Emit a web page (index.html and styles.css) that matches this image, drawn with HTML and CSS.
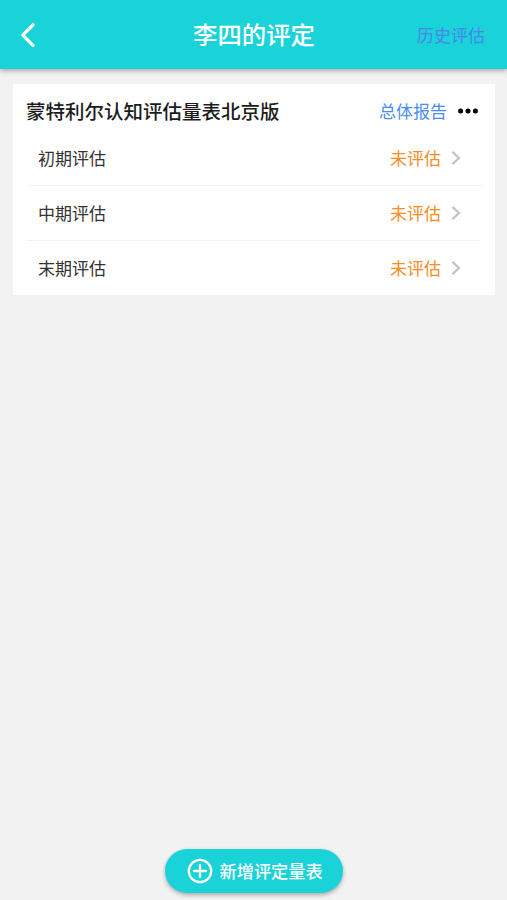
FILE: index.html
```html
<!DOCTYPE html>
<html lang="zh-CN">
<head>
    <meta charset="UTF-8">
    <meta name="viewport" content="width=device-width, initial-scale=1.0">
    <title>李四的评定</title>
    <link rel="stylesheet" href="styles.css">
</head>
<body>
    <header class="navbar">
        <a class="back" href="#" aria-label="返回">
            <svg width="16" height="26" viewBox="0 0 16 26"><path d="M13 2.8 2.8 13.2 13 23.4"/></svg>
        </a>
        <h1>李四的评定</h1>
        <a class="history" href="#">历史评估</a>
    </header>

    <main>
        <section class="card">
            <div class="card-header">
                <h2>蒙特利尔认知评估量表北京版</h2>
                <a class="report" href="#">总体报告</a>
                <svg class="more" width="20" height="6" viewBox="0 0 20 6"><circle cx="2.6" cy="3" r="2.5"/><circle cx="10" cy="3" r="2.5"/><circle cx="17.4" cy="3" r="2.5"/></svg>
            </div>
            <ul class="stages">
                <li>
                    <span class="name">初期评估</span>
                    <span class="status">未评估</span>
                    <svg class="arrow" width="10" height="16" viewBox="0 0 10 16"><path d="M1.4 1.8 8 8l-6.6 6.2"/></svg>
                </li>
                <li>
                    <span class="name">中期评估</span>
                    <span class="status">未评估</span>
                    <svg class="arrow" width="10" height="16" viewBox="0 0 10 16"><path d="M1.4 1.8 8 8l-6.6 6.2"/></svg>
                </li>
                <li>
                    <span class="name">末期评估</span>
                    <span class="status">未评估</span>
                    <svg class="arrow" width="10" height="16" viewBox="0 0 10 16"><path d="M1.4 1.8 8 8l-6.6 6.2"/></svg>
                </li>
            </ul>
        </section>
    </main>

    <footer>
        <button class="add-btn" type="button">
            <svg width="26" height="26" viewBox="0 0 26 26"><circle cx="13" cy="13" r="11.2"/><path d="M13 7v12M7 13h12"/></svg>
            <span>新增评定量表</span>
        </button>
    </footer>
</body>
</html>
```

FILE: styles.css
```css
* { box-sizing: border-box; }
body { display: flex; flex-direction: column; height: 100vh; margin: 0; background-color: #f2f2f2; color: #333; font-family: 'Noto Sans CJK SC', sans-serif; font-size: 17px; }
a { text-decoration: none; }
h1, h2, ul { margin: 0; padding: 0; }
svg { display: block; flex: none; }

.navbar { display: grid; grid-template-columns: 1fr auto 1fr; align-items: center; height: 69px; padding: 0 22px 0 20px; background-color: #1ad3d9; box-shadow: 0 2px 5px rgba(0,0,0,0.3); }
.navbar h1 { padding: 0 0 1px 3px; color: white; font-size: 24.4px; font-weight: 500; line-height: 36px; }
.back path { fill: none; stroke: white; stroke-width: 3.2; stroke-linecap: round; stroke-linejoin: round; }
.history { color: #4a84ee; text-align: right; line-height: 26px; }

main { flex: 1; padding: 15px 12px 0 13px; }
.card { height: 211px; padding: 7px 10px 0 13px; background-color: white; }
.card-header { display: flex; align-items: center; height: 40px; padding-right: 7px; }
.card-header h2 { flex: 1; padding-bottom: 2px; color: #1c1c1c; font-size: 19.5px; font-weight: 500; }
.report { margin-right: 11px; padding-bottom: 2px; color: #4a8df0; }
.more { fill: #000; }
.stages { list-style: none; }
.stages li { display: flex; align-items: center; height: 55px; padding: 0 24px 0 12px; border-bottom: 1px solid #f3f3f3; }
.stages li:nth-child(2) { margin-right: 4px; padding-right: 20px; }
.stages li:last-child { border-bottom-color: transparent; }
.name { flex: 1; padding-bottom: 2px; }
.status { margin-right: 10px; padding-bottom: 2px; color: #fa8c22; }
.arrow path { fill: none; stroke: #c4c4c4; stroke-width: 2.3; }

footer { display: flex; justify-content: center; padding-bottom: 7px; }
.add-btn { display: flex; align-items: center; width: 178px; height: 44px; padding: 0 0 0 22px; border: none; border-radius: 22px; background-color: #1ad3d9; box-shadow: 0 2px 4px rgba(0,0,0,0.3); color: white; font-family: inherit; font-size: 17.2px; font-weight: 500; white-space: nowrap; }
.add-btn svg { margin-right: 7px; fill: none; stroke: white; stroke-width: 2.3; stroke-linecap: round; }
.add-btn span { padding-bottom: 2px; }
```
